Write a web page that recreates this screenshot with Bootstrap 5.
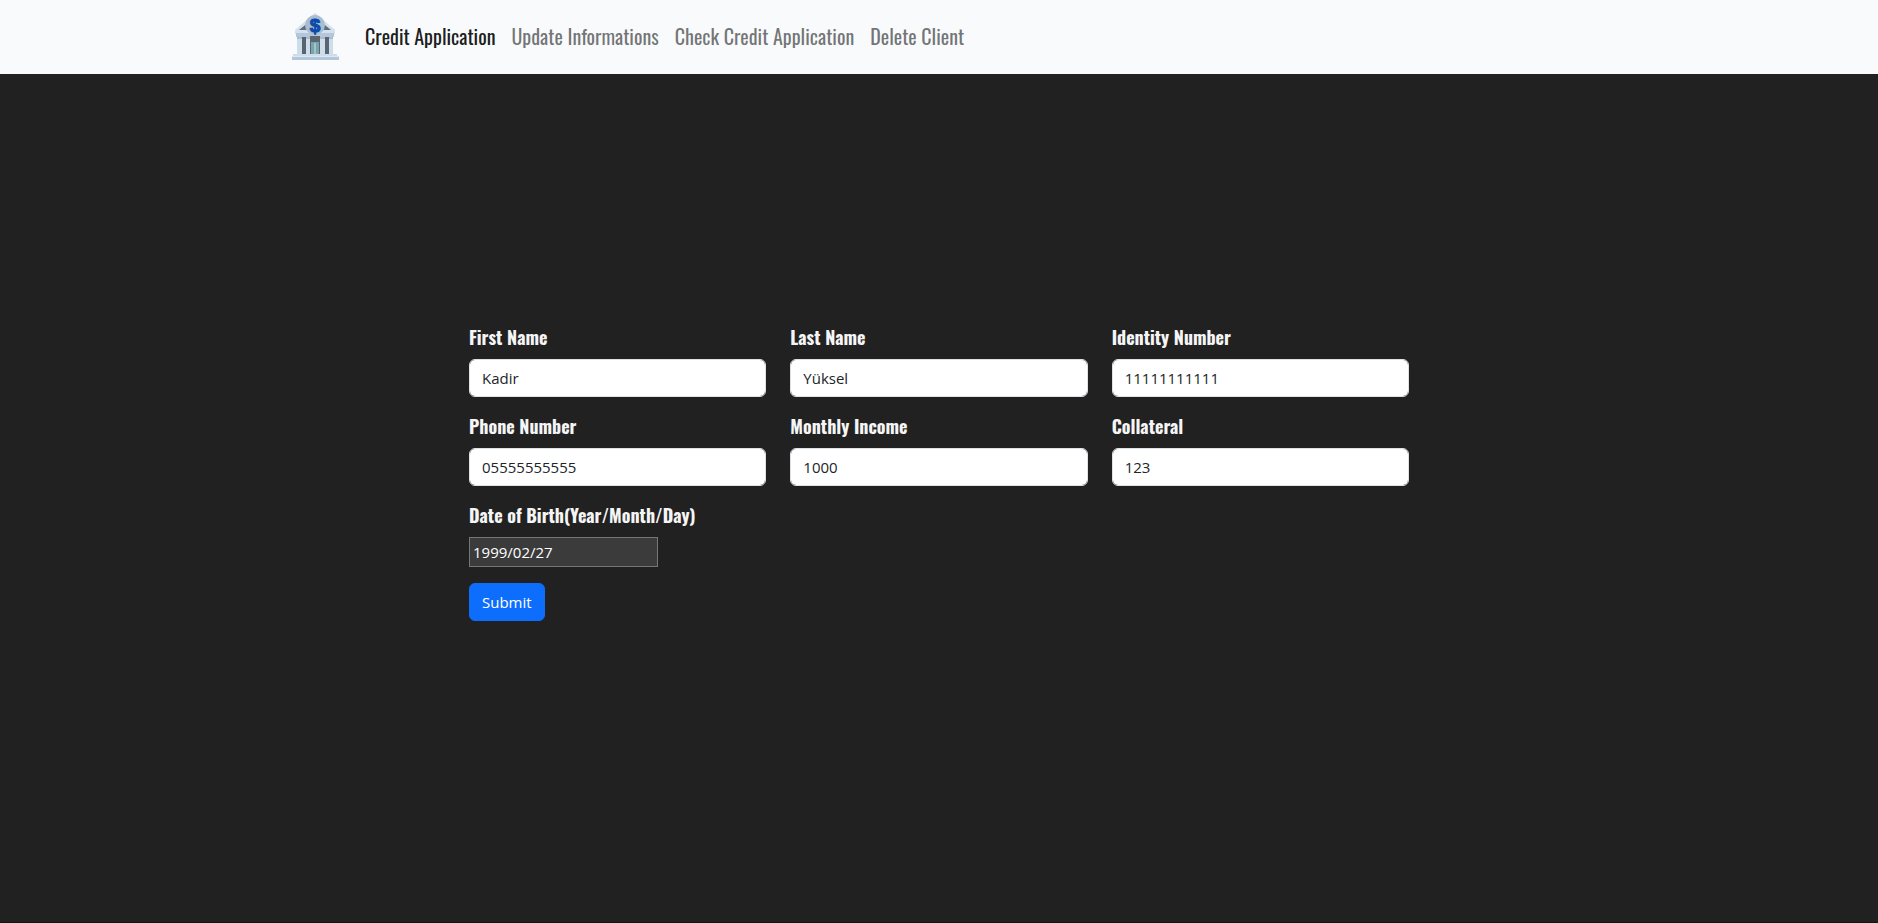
<!DOCTYPE html>
<html lang="en">
<head>
<meta charset="utf-8">
<meta name="viewport" content="width=device-width, initial-scale=1">
<title>Credit Application</title>
<link href="https://cdn.jsdelivr.net/npm/bootstrap@5.3.0/dist/css/bootstrap.min.css" rel="stylesheet">
<style>
  body { background: #212121; font-family: "Open Sans", "Noto Sans", sans-serif; }
  .page { min-height: 100vh; border-bottom: 1px solid #121212; }
  .site-nav { background: #f8fafc; }
  .site-nav .navbar-brand { padding: 4px 0; }
  .site-nav .nav-link, .form-label { font-family: Oswald, "Liberation Sans Narrow", "Roboto Condensed", sans-serif; }
  .site-nav .nav-link { padding-top: 7px; padding-bottom: 9px; font-size: 20px; line-height: 30px; color: rgba(0, 0, 0, .55); }
  .site-nav .nav-link.active { color: rgba(0, 0, 0, .9); }
  .form-area { max-width: 964px; padding-top: 250px; }
  .form-label { font-size: 18px; line-height: 27px; font-weight: 700; color: #f5f5f5; }
  .form-control, .btn { font-size: 15px; line-height: 24px; }
  .date-input { width: 189px; height: 30px; padding: 1px 3px; font-size: 15px; color: #fff; background: #3b3b3b; border: 1px solid #767676; }
</style>
</head>
<body>
<div class="page">
  <nav class="navbar navbar-expand-lg site-nav">
    <div class="container">
      <a class="navbar-brand" href="#" aria-label="Home">
        <svg class="d-block" width="50" height="50" viewBox="0 0 50 50" aria-hidden="true">
          <path d="M4 18 24 1l20 17z" fill="#d3dfec"/>
          <path d="M8 18 24 5l16 13z" fill="#5f6e7b"/>
          <path d="M4 18h40v4H4z" fill="#d5e1ee"/>
          <path d="M5 21h38v4H5z" fill="#b4c6d9"/>
          <path d="M6 25h36v18H6z" fill="#bdcddd"/>
          <path d="M11 25h4v17h-4zM34 25h4v17h-4z" fill="#566571"/>
          <path d="M19 24h10v18H19z" fill="#5d6670"/>
          <path d="M20 30h8v12h-8z" fill="#78a5ae"/>
          <path d="M23 31h2v11h-2z" fill="#9dc6c9"/>
          <path d="M6 25h5v17H6zM15 25h4v17h-4zM29 25h5v17h-5zM38 25h4v17h-4z" fill="#cfdcea"/>
          <path d="M6 25h5v2H6zM15 25h4v2h-4zM29 25h5v2h-5zM38 25h4v2h-4z" fill="#a9bccf"/>
          <path d="M2 42h44v3H2z" fill="#cfdcea"/>
          <path d="M1 44h47v4H1z" fill="#b4c6d9"/>
          <path d="M1 44h47v1H1z" fill="#dce7f1"/>
          <circle cx="24" cy="13" r="10" fill="#a9bfd1"/>
          <text x="24" y="20" text-anchor="middle" font-family="Liberation Sans, sans-serif" font-weight="700" font-size="19" fill="#0d4bab" stroke="#0d4bab">$</text>
        </svg>
      </a>
      <button class="navbar-toggler" type="button" data-bs-toggle="collapse" data-bs-target="#mainNav" aria-controls="mainNav" aria-expanded="false" aria-label="Toggle navigation"><span class="navbar-toggler-icon"></span></button>
      <div class="collapse navbar-collapse" id="mainNav">
        <ul class="navbar-nav">
          <li class="nav-item"><a class="nav-link active" aria-current="page" href="#">Credit Application</a></li>
          <li class="nav-item"><a class="nav-link" href="#">Update Informations</a></li>
          <li class="nav-item"><a class="nav-link" href="#">Check Credit Application</a></li>
          <li class="nav-item"><a class="nav-link" href="#">Delete Client</a></li>
        </ul>
      </div>
    </div>
  </nav>
  <main class="form-area container-fluid">
    <form class="row gy-3 gx-4 mt-0">
      <div class="col-md-4 mt-0"><label class="form-label mb-2 d-block" for="firstName">First Name</label><input class="form-control" id="firstName" type="text" value="Kadir"></div>
      <div class="col-md-4 mt-0"><label class="form-label mb-2 d-block" for="lastName">Last Name</label><input class="form-control" id="lastName" type="text" value="Yüksel"></div>
      <div class="col-md-4 mt-0"><label class="form-label mb-2 d-block" for="identity">Identity Number</label><input class="form-control" id="identity" type="text" value="11111111111"></div>
      <div class="col-md-4"><label class="form-label mb-2 d-block" for="phone">Phone Number</label><input class="form-control" id="phone" type="text" value="05555555555"></div>
      <div class="col-md-4"><label class="form-label mb-2 d-block" for="income">Monthly Income</label><input class="form-control" id="income" type="text" value="1000"></div>
      <div class="col-md-4"><label class="form-label mb-2 d-block" for="collateral">Collateral</label><input class="form-control" id="collateral" type="text" value="123"></div>
      <div class="col-12"><label class="form-label mb-2 d-block" for="birth">Date of Birth(Year/Month/Day)</label><input class="date-input d-block" id="birth" type="text" value="1999/02/27"></div>
      <div class="col-12"><button class="btn btn-primary" type="submit">Submit</button></div>
    </form>
  </main>
</div>
<script src="https://cdn.jsdelivr.net/npm/bootstrap@5.3.0/dist/js/bootstrap.bundle.min.js"></script>
</body>
</html>
